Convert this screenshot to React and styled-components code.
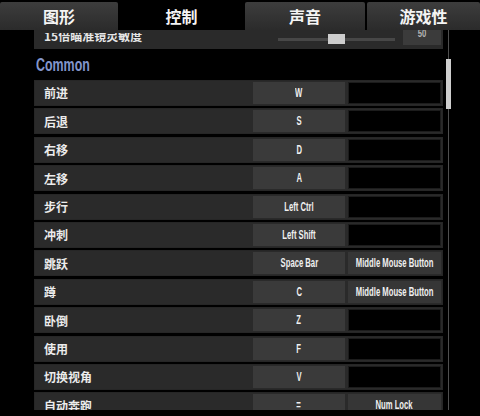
import React from 'react';
import styled, { createGlobalStyle } from 'styled-components';

const GlobalStyle = createGlobalStyle`
  html, body {
    margin: 0;
    background: #000;
  }
  body {
    font-family: "Noto Sans CJK SC", "Noto Sans", sans-serif;
  }
`;

const Screen = styled.div`
  width: 480px;
  height: 416px;
  background: #000;
  display: flex;
  flex-direction: column;
  overflow: hidden;
`;

const TabBar = styled.div`
  display: grid;
  grid-template-columns: 118px 123px 120px 113px;
  column-gap: 2px;
  height: 30px;
  padding-top: 2px;
  box-sizing: border-box;
  flex-shrink: 0;
  background: #000;
`;

const Tab = styled.div`
  display: flex;
  align-items: center;
  justify-content: center;
  background: ${(p) => (p.active ? '#000' : 'linear-gradient(#3d3d3d, #2b2b2b)')};
  color: #f4f4f4;
  font-size: 16px;
  font-weight: 700;
  border-radius: 2px 2px 0 0;
`;

const Viewport = styled.div`
  height: 380px;
  display: flex;
  overflow: hidden;
  flex-shrink: 0;
`;

const List = styled.div`
  width: 409px;
  margin-left: 34px;
  margin-top: -7px;
  display: flex;
  flex-direction: column;
`;

// condensed game font: Arial widths squeezed horizontally
const Narrow = styled.span`
  display: inline-block;
  white-space: nowrap;
  font-family: "Liberation Sans", Arial, sans-serif;
  font-weight: 700;
  font-size: ${(p) => p.size || 12}px;
  transform: scaleX(${(p) => p.squeeze || 0.64});
`;

const SliderRow = styled.div`
  display: flex;
  align-items: center;
  height: 26px;
  flex-shrink: 0;
  margin-bottom: 2.4px;
  padding: 0 2px 0 10px;
  background: #2a2a2a;
  color: #e6e6e6;
  font-size: 12px;
  font-weight: 700;
`;

const SliderLabel = styled.div`
  flex: 1;
  align-self: flex-end;
  height: 10px;
  margin-bottom: 6px;
  overflow: hidden;
  display: flex;
  align-items: flex-end;
  line-height: 14px;
`;

const Track = styled.div`
  position: relative;
  width: 117px;
  height: 3px;
  margin: 6px 8px 0 0;
  background: #474747;
`;

const Thumb = styled.div`
  position: absolute;
  left: 50px;
  top: -4px;
  width: 17px;
  height: 10px;
  background: #cdcdcd;
`;

const ValueBox = styled.div`
  align-self: flex-end;
  width: 38px;
  height: 20px;
  margin-bottom: 4px;
  background: #3b3b3b;
  color: #b5b5b5;
  text-align: center;
  line-height: 14px;
`;

const SectionHeader = styled.div`
  height: 28.6px;
  flex-shrink: 0;
  display: flex;
  align-items: center;
  padding-left: 2px;
  color: #8396cc;
  span {
    transform-origin: left center;
  }
`;

const Row = styled.div`
  display: grid;
  grid-template-columns: 219px 92px minmax(0, 1fr);
  height: 26px;
  flex-shrink: 0;
  margin-bottom: 2.4px;
  background: #2a2a2a;
  box-shadow: inset 0 0 0 1px #262626;
`;

const Label = styled.div`
  display: flex;
  align-items: center;
  padding-left: 10px;
  color: #ececec;
  font-size: 12px;
  font-weight: 700;
`;

const Key = styled.div`
  display: flex;
  align-items: center;
  justify-content: center;
  min-width: 0;
  margin: 2px 0;
  background: #3a3a3a;
  color: #f0f0f0;
`;

const AltSlot = styled.div`
  display: flex;
  min-width: 0;
  padding: 2px 2px 2px 3px;
`;

const AltKey = styled.div`
  flex: 1;
  min-width: 0;
  display: flex;
  align-items: center;
  justify-content: center;
  background: ${(p) => (p.empty ? '#000' : '#363636')};
  box-shadow: ${(p) => (p.empty ? 'inset 0 0 0 1px #1c1c1c' : 'none')};
  color: #f0f0f0;
`;

const Scrollbar = styled.div`
  width: 5px;
  margin-left: 3px;
  display: flex;
  flex-direction: column;
  background: linear-gradient(to right, transparent 2px, #4f4f4f 2px, #4f4f4f 3px, transparent 3px);
`;

const ScrollThumb = styled.div`
  height: 50px;
  margin-top: 29px;
  background: #cfcfcf;
`;

const tabs = ['图形', '控制', '声音', '游戏性'];

const bindings = [
  ['前进', 'W', ''],
  ['后退', 'S', ''],
  ['右移', 'D', ''],
  ['左移', 'A', ''],
  ['步行', 'Left Ctrl', ''],
  ['冲刺', 'Left Shift', ''],
  ['跳跃', 'Space Bar', 'Middle Mouse Button'],
  ['蹲', 'C', 'Middle Mouse Button'],
  ['卧倒', 'Z', ''],
  ['使用', 'F', ''],
  ['切换视角', 'V', ''],
  ['自动奔跑', '=', 'Num Lock'],
];

export default function App() {
  return (
    <>
      <GlobalStyle />
      <Screen>
        <TabBar>
          {tabs.map((t) => (
            <Tab key={t} active={t === '控制'}>{t}</Tab>
          ))}
        </TabBar>
        <Viewport>
          <List>
            <SliderRow>
              <SliderLabel>15倍瞄准镜灵敏度</SliderLabel>
              <Track>
                <Thumb />
              </Track>
              <ValueBox>
                <Narrow size={11} squeeze={0.7}>50</Narrow>
              </ValueBox>
            </SliderRow>
            <SectionHeader>
              <Narrow size={18} squeeze={0.69}>Common</Narrow>
            </SectionHeader>
            {bindings.map(([name, key, alt]) => (
              <Row key={name}>
                <Label>{name}</Label>
                <Key>
                  <Narrow>{key}</Narrow>
                </Key>
                <AltSlot>
                  <AltKey empty={!alt}>
                    {alt && <Narrow>{alt}</Narrow>}
                  </AltKey>
                </AltSlot>
              </Row>
            ))}
          </List>
          <Scrollbar>
            <ScrollThumb />
          </Scrollbar>
        </Viewport>
      </Screen>
    </>
  );
}
